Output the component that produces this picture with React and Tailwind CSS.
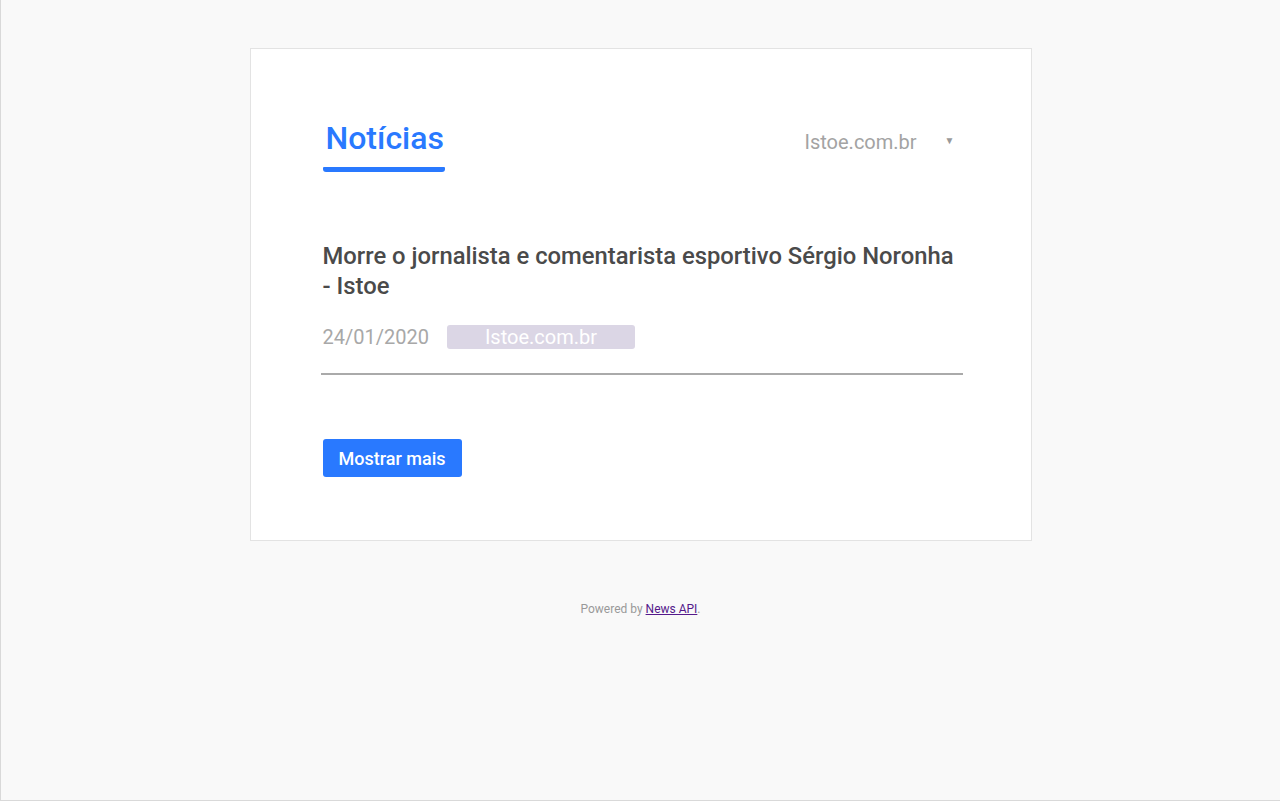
import React from 'react';

const font = { fontFamily: 'Roboto, "Noto Sans", sans-serif' };

export default function App() {
	const [source, setSource] = React.useState('Istoe.com.br');

	return (
		<div
			className="h-[801px] bg-[#f9f9f9] border-l border-b border-[#d9d9d9] pt-[48px]"
			style={font}
		>
			<div className="mx-auto w-[782px] bg-white border border-[#e3e3e3] pl-[72px] pr-[68px] pt-[70px] pb-[63px]">
				<div className="flex items-start justify-between">
					<div className="flex flex-col items-start">
						<h1 className="px-[3px] text-[32px] leading-[38px] font-medium text-[#2979ff]">
							Notícias
						</h1>
						<div className="mt-[10px] h-[5px] w-[122px] rounded-b-[3px] rounded-t-[1px] bg-[#2979ff]" />
					</div>
					<div className="relative mt-[11px] flex w-[158px] items-center">
						<select
							value={source}
							onChange={(e) => setSource(e.target.value)}
							className="w-full appearance-none bg-transparent text-[20px] leading-[24px] text-[#a3a3a3] outline-none"
						>
							<option>Istoe.com.br</option>
						</select>
						<span className="pointer-events-none absolute right-[8px] top-[3px] text-[10px] text-[#999]">
							▼
						</span>
					</div>
				</div>

				<div className="mt-[69px] -ml-[2px] border-b-2 border-[#aaaaaa] pl-[2px] pb-[24px]">
					<h2 className="text-[23.8px] leading-[30px] font-medium text-[#4a4a4a]">
						Morre o jornalista e comentarista esportivo Sérgio Noronha - Istoe
					</h2>
					<div className="mt-[24px] flex items-center gap-[18px]">
						<span className="text-[20px] leading-[24px] text-[#a8a8a8]">24/01/2020</span>
						<span className="flex h-[24px] w-[188px] items-center justify-center rounded-[3px] bg-[#dbd6e5] text-[20px] leading-[24px] text-white">
							Istoe.com.br
						</span>
					</div>
				</div>

				<button className="mt-[64px] h-[38px] rounded-[3px] bg-[#2979ff] px-[16px] text-[18px] font-medium text-white">
					Mostrar mais
				</button>
			</div>

			<p className="mt-[59px] text-center text-[12px] text-[#999]">
				Powered by{' '}
				<a href="#" className="text-[#551a8b] underline">
					News API
				</a>
				.
			</p>
		</div>
	);
}
